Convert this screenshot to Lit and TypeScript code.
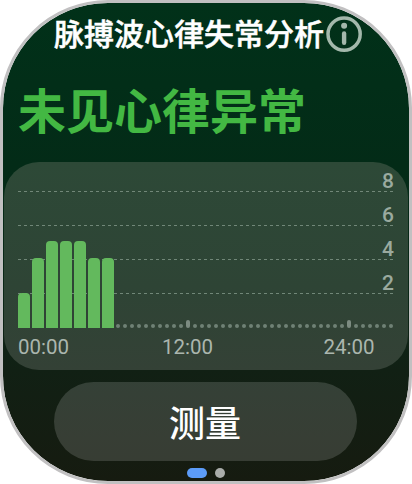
import { LitElement, html, css, svg } from "lit";
import { customElement } from "lit/decorators.js";

const LEVELS = [8, 6, 4, 2];
const BARS = [35, 70, 87, 87, 87, 70, 70];
const SLOTS = Array.from({ length: 40 }, (_, i) => i);
const HOUR_TICKS = [10, 33];

@customElement("pulse-chart")
export class PulseChart extends LitElement {
  static styles = css`
    :host {
      display: block;
      box-sizing: border-box;
      height: 208px;
      margin: 0 1px;
      padding: 0 14px;
      border-radius: 35px;
      background: linear-gradient(#2d4937, #2e4435 60%, #344136);
      font-family: Roboto, "Noto Sans CJK SC", sans-serif;
      color: #9aaa9f;
    }
    .plot {
      position: relative;
      height: 166px;
    }
    .levels {
      display: grid;
      grid-template-rows: repeat(4, 34px);
    }
    .level {
      box-sizing: border-box;
      padding-top: 7px;
      text-align: right;
      font-size: 21px;
      font-weight: 500;
      line-height: 24px;
    }
    .grid {
      position: absolute;
      inset: 0;
      width: 376px;
      height: 166px;
    }
    .series {
      position: absolute;
      left: 0;
      right: 0;
      bottom: 0;
      display: flex;
      align-items: flex-end;
    }
    .bar {
      width: 12px;
      margin-right: 2px;
      border-radius: 4px 4px 0 0;
      background: #63b95d;
    }
    .slots {
      display: flex;
      align-items: flex-end;
      gap: 3px;
    }
    .slot {
      width: 4px;
      height: 4px;
      border-radius: 2px;
      background: #6f8175;
    }
    .tick {
      height: 8px;
      background: #7c8b81;
    }
    .hours {
      display: grid;
      grid-template-columns: 144px 161.5px auto;
      font-size: 20.5px;
      line-height: 24px;
      padding-top: 7px;
      color: #abb6ae;
    }
  `;

  render() {
    return html`
      <div class="plot">
        <svg class="grid" viewBox="0 0 376 166">
          ${LEVELS.map(
            (_, i) => svg`<line x1="0" x2="376" y1=${29.5 + i * 34} y2=${29.5 + i * 34}
              stroke="#718778" stroke-width="1" stroke-dasharray="3 3" />`
          )}
        </svg>
        <div class="levels">${LEVELS.map((n) => html`<div class="level">${n}</div>`)}</div>
        <div class="series">
          ${BARS.map((h) => html`<div class="bar" style="height:${h}px"></div>`)}
          <div class="slots">
            ${SLOTS.map((i) => html`<div class="slot ${HOUR_TICKS.includes(i) ? "tick" : ""}"></div>`)}
          </div>
        </div>
      </div>
      <div class="hours"><span>00:00</span><span>12:00</span><span>24:00</span></div>
    `;
  }
}

@customElement("app-root")
export class AppRoot extends LitElement {
  static styles = css`
    :host {
      display: block;
      width: 412px;
      height: 484px;
      background: #fff;
      font-family: "Noto Sans CJK SC", sans-serif;
    }
    .watch {
      box-sizing: border-box;
      width: 412px;
      height: 484px;
      border: 3px solid #c1c0c1;
      border-radius: 108px;
      overflow: hidden;
      display: flex;
      flex-direction: column;
      background: linear-gradient(#013119, #032b17 34%, #0a2817 60%, #112014 77%, #161b10) padding-box;
    }
    header {
      display: flex;
      align-items: flex-start;
      gap: 2px;
      height: 38px;
      margin: 11px 0 0 51px;
      color: #fff;
    }
    h1 {
      margin: 0;
      font-size: 30px;
      line-height: 36px;
      font-weight: 500;
      -webkit-text-stroke: 0.5px #fff;
      white-space: nowrap;
    }
    .info {
      width: 36px;
      height: 36px;
      margin-top: 2px;
      flex: none;
    }
    h2 {
      margin: 26px 0 0 15px;
      height: 84px;
      font-size: 48px;
      line-height: 60px;
      font-weight: 700;
      color: #43b843;
      white-space: nowrap;
    }
    pulse-chart {
      flex: none;
    }
    button {
      flex: none;
      width: 303px;
      height: 79px;
      margin: 12px 0 0 51px;
      padding: 0 1px 1px 0;
      border: 0;
      border-radius: 40px;
      background: rgba(255, 255, 255, 0.15);
      color: #fff;
      font: 500 36px/78px "Noto Sans CJK SC", sans-serif;
    }
    .pages {
      display: flex;
      gap: 8px;
      margin: 7px 0 0 184px;
    }
    .page {
      width: 10px;
      height: 10px;
      border-radius: 5px;
      background: #aaadaa;
    }
    .current {
      width: 20px;
      background: #5c9cf8;
    }
  `;

  render() {
    return html`
      <main class="watch">
        <header>
          <h1>脉搏波心律失常分析</h1>
          <svg class="info" viewBox="0 0 36 36">
            <circle cx="18.1" cy="18.1" r="16.1" fill="none" stroke="#a3b8ab" stroke-width="3.5" />
            <circle cx="18.1" cy="9.8" r="3" fill="#a3b8ab" />
            <path d="M18.1 17.4v9.4" stroke="#a3b8ab" stroke-width="4.4" stroke-linecap="round" />
          </svg>
        </header>
        <h2>未见心律异常</h2>
        <pulse-chart></pulse-chart>
        <button>测量</button>
        <div class="pages"><span class="page current"></span><span class="page"></span></div>
      </main>
    `;
  }
}
